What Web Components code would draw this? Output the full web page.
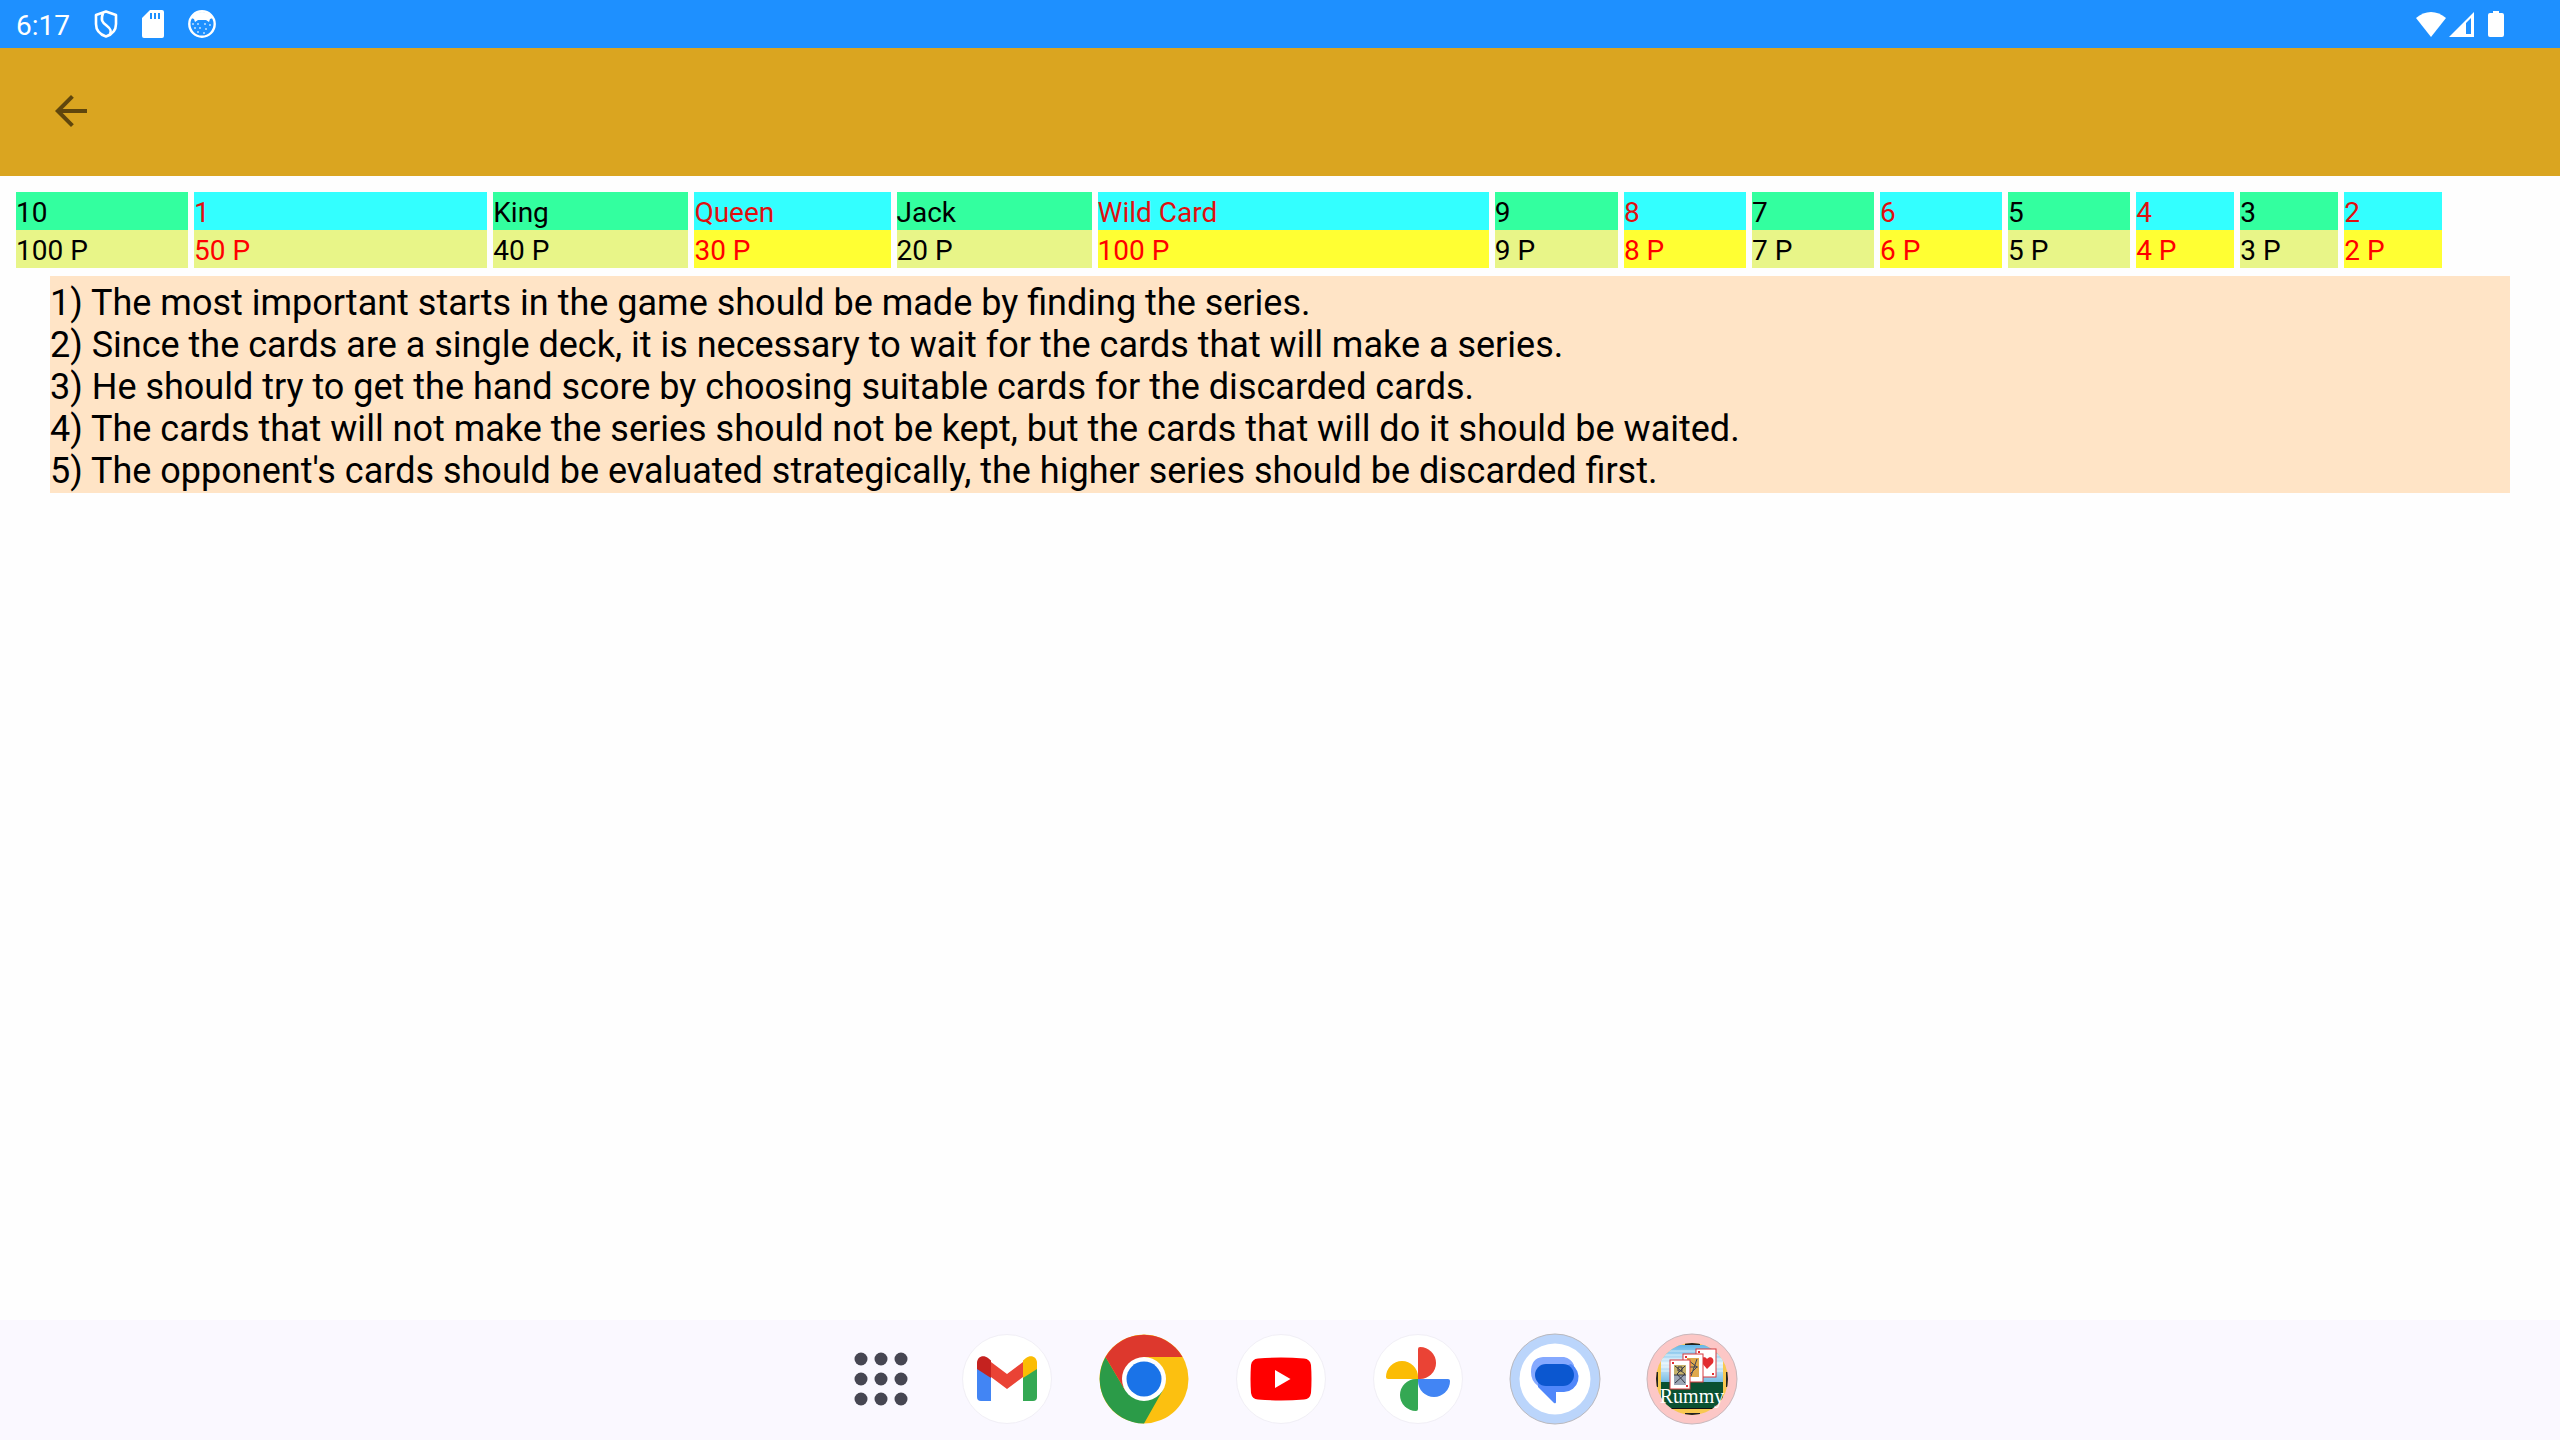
<!DOCTYPE html>
<html lang="en">
<head>
<meta charset="utf-8">
<meta name="viewport" content="width=device-width, initial-scale=1">
<title>Rummy</title>
<style>
  html, body { height: 100%; margin: 0; }
  body { font-family: Roboto, "Noto Sans", sans-serif; color: #000; background: #fefefe; }
</style>
</head>
<body>
<rummy-screen>
  <status-bar slot="status" time="6:17"></status-bar>
  <app-bar slot="bar"></app-bar>
  <score-table></score-table>
  <tip-list>
    <li>The most important starts in the game should be made by finding the series.</li>
    <li>Since the cards are a single deck, it is necessary to wait for the cards that will make a series.</li>
    <li>He should try to get the hand score by choosing suitable cards for the discarded cards.</li>
    <li>The cards that will not make the series should not be kept, but the cards that will do it should be waited.</li>
    <li>The opponent's cards should be evaluated strategically, the higher series should be discarded first.</li>
  </tip-list>
  <task-bar slot="dock"></task-bar>
</rummy-screen>

<script>
(function () {
  // label, points, relative column width
  const CARDS = [
    ["10", "100 P", 172],
    ["1", "50 P", 293],
    ["King", "40 P", 195],
    ["Queen", "30 P", 196],
    ["Jack", "20 P", 195],
    ["Wild Card", "100 P", 391],
    ["9", "9 P", 123],
    ["8", "8 P", 122],
    ["7", "7 P", 122],
    ["6", "6 P", 122],
    ["5", "5 P", 122],
    ["4", "4 P", 98],
    ["3", "3 P", 98],
    ["2", "2 P", 98],
  ];

  const STATUS_ICONS = {
    shield: `<svg width="24" height="30" viewBox="0 0 24 30" fill="none" stroke="#fff" stroke-width="2.600" stroke-linejoin="round"><path d="M12 2.500L22 6v9c0 6-4 10.500-10 12.500C6 25.500 2 21 2 15V6z"/><path d="M9 4C6.500 11 8 13 12.500 16.500S17.500 22 16 25"/></svg>`,
    card: `<svg width="22" height="28" viewBox="0 0 22 28"><path fill="#fff" fill-rule="evenodd" d="M8 0h12q2 0 2 2v24q0 2-2 2H2q-2 0-2-2V8zM8 3v6h2V3zM12 3v6h2V3zM16 3v6h2V3z"/></svg>`,
    face: `<svg width="28" height="28" viewBox="0 0 28 28"><circle cx="14" cy="14" r="12.700" fill="none" stroke="#fff" stroke-width="2.400"/><path fill="#fff" d="M3 8C8 0 20 0 25 8l-3 1-1 3-3-2h-8l-3 2-1-3z"/><g fill="#fff" opacity=".7"><circle cx="5" cy="14" r="1"/><circle cx="10" cy="14" r="1"/><circle cx="17" cy="14" r="1"/><circle cx="22" cy="15" r="1"/><circle cx="7" cy="18" r="1"/><circle cx="12" cy="18" r="1"/><circle cx="18" cy="19" r="1"/><circle cx="10" cy="22" r="1"/><circle cx="16" cy="23" r="1"/></g></svg>`,
    wifi: `<svg width="30" height="25" viewBox="0 0 30 25"><path fill="#fff" d="M15 25L0 6C9-2 21-2 30 6z"/></svg>`,
    signal: `<svg width="25" height="25" viewBox="0 0 25 25"><path fill="#fff" fill-rule="evenodd" d="M25 0v25H0zM17 11v11h5V6z"/></svg>`,
    battery: `<svg width="16" height="26" viewBox="0 0 16 26"><path fill="#fff" d="M5 0h6v2h3q2 0 2 2v20q0 2-2 2H2q-2 0-2-2V4q0-2 2-2h3z"/></svg>`,
  };

  const APP_ICONS = [
    ["Gmail", `<circle cx="46" cy="46" r="44.500" fill="#fff" stroke="#f1eff6"/>
      <path fill="#4285f4" d="M16 34l14 10v24H20q-4 0-4-4z"/>
      <path fill="#34a853" d="M62 44l14-10v30q0 4-4 4H62z"/>
      <path fill="#ea4335" d="M30 29l16 12 16-12v15L46 56 30 44z"/>
      <path fill="#c5221f" d="M16 36v-6c0-6 6-9 11-5l3 2.500V45z"/>
      <path fill="#fbbc04" d="M76 36v-6c0-6-6-9-11-5l-3 2.500V45z"/>`],
    ["Chrome", `<circle cx="46" cy="46" r="44.500" fill="#fcc010"/>
      <path fill="#2b9b48" d="M7.500 24A44.500 44.500 0 0 0 46 90.500L65 57 27 57z"/>
      <path fill="#dd382d" d="M7.500 24A44.500 44.500 0 0 1 84.500 24H46L27 57z"/>
      <circle cx="46" cy="46" r="22" fill="#fff"/><circle cx="46" cy="46" r="17.500" fill="#1a73e8"/>`],
    ["YouTube", `<circle cx="46" cy="46" r="44.500" fill="#fff" stroke="#f1eff6"/>
      <path fill="#f00" d="M23 25.500Q46 23.500 69 25.500Q75 26 76 32Q77 46 76 60Q75 66 69 66.500Q46 68.500 23 66.500Q17 66 16 60Q15 46 16 32Q17 26 23 25.500z"/>
      <path fill="#fff" d="M40 37v18l15.500-9z"/>`],
    ["Photos", `<circle cx="46" cy="46" r="44.500" fill="#fff" stroke="#f1eff6"/>
      <path fill="#ea4335" d="M46 46V16q0-2 2-2a16 16 0 0 1 0 32z"/>
      <path fill="#4285f4" d="M46 46h30q2 0 2 2a16 16 0 0 1-32 0z"/>
      <path fill="#34a853" d="M46 46v30q0 2-2 2a16 16 0 0 1 0-32z"/>
      <path fill="#fbbc04" d="M46 46H16q-2 0-2-2a16 16 0 0 1 32 0z"/>`],
    ["Messages", `<circle cx="46" cy="46" r="45" fill="#bbd5fb" stroke="#b9b8bd"/>
      <circle cx="46" cy="46" r="35.500" fill="#fff"/>
      <path fill="#85a9ff" d="M34 24h21a14 14 0 0 1 10 8v21L29 53a17 17 0 0 1-7-14q0-14 12-15z"/>
      <path fill="#5087fa" d="M62 31a15 15 0 0 1-7 28H47v10q0 2-2 1L29 54V42z"/>
      <rect x="26" y="31" width="39" height="22" rx="11" fill="#0b57d0"/>`],
    ["Rummy", `<defs>
        <clipPath id="face"><circle cx="46" cy="46" r="36"/></clipPath>
        <linearGradient id="sky" x2="0" y2="1"><stop stop-color="#63b5e8"/><stop offset=".5" stop-color="#dff1fb"/><stop offset="1" stop-color="#6fb9e4"/></linearGradient>
      </defs>
      <circle cx="46" cy="46" r="45" fill="#fcc7c6" stroke="#c9b7bb"/>
      <g clip-path="url(#face)">
        <rect width="92" height="92" fill="#f8c850"/>
        <path fill="#222" d="M39 10h15v2H39zM39 80h15v2H39zM10 39h2v15h-2zM80 39h2v15h-2z"/>
        <rect x="15" y="12" width="62" height="38" fill="url(#sky)"/>
        <path stroke="#fff" opacity=".6" d="M15 18h62M15 22h62M15 26h62M15 30h62M15 34h62M15 38h62"/>
        <rect x="15" y="49" width="62" height="26" fill="#0a5132"/>
        <path fill="#111" d="M15 75h62v1H15z"/>
      </g>
      <rect x="50" y="16" width="20" height="28" fill="#fff" stroke="#d8383d"/>
      <path fill="#e22c30" d="M61 36l-5-6c-3-5 3-8 5-4 3-4 8-1 6 4z"/>
      <rect x="37" y="21" width="20" height="28" fill="#fff" stroke="#d8383d"/>
      <path fill="#dfa94c" d="M41 25h12v19H41z"/>
      <path fill="none" stroke="#414456" d="M42 27l9 7-8 8M51 26l-6 17M42 34h10"/>
      <rect x="24" y="27" width="20" height="29" fill="#fff" stroke="#d8383d"/>
      <path fill="#c6b26a" d="M28 32h12v10H28z"/>
      <path fill="#9ba5b4" d="M28 42h12v10H28z"/>
      <path fill="none" stroke="#363844" d="M29 33l10 8-10 9M39 33l-8 8 8 9M28 42h12M32 34h4v4h-4z"/>
      <path stroke="#e22c30" stroke-width="2" d="M26 30h2M39 24h2M52 19h2M66 41h2M40 53h2"/>
      <text x="46" y="70" text-anchor="middle" font-family="Liberation Serif, serif" font-size="20" fill="#fff">Rummy</text>`],
  ];

  class RummyScreen extends HTMLElement {
    constructor() {
      super();
      this.attachShadow({ mode: "open" });
      this.shadowRoot.innerHTML = `
        <style>
          :host {
            display: flex;
            flex-direction: column;
            min-height: 100%;
          }

          main {
            display: flex;
            flex: 1;
            flex-direction: column;
            gap: 8px;
            padding: 16px 10px;
          }
        </style>
        <slot name="status"></slot>
        <slot name="bar"></slot>
        <main><slot></slot></main>
        <slot name="dock"></slot>
      `;
    }
  }

  class StatusBar extends HTMLElement {
    constructor() {
      super();
      this.attachShadow({ mode: "open" });
    }

    connectedCallback() {
      this.shadowRoot.innerHTML = `
        <style>
          :host {
            align-items: center;
            background: #1e90ff;
            box-sizing: border-box;
            color: #fff;
            display: flex;
            font-size: 28px;
            height: 48px;
            justify-content: space-between;
            line-height: 32px;
            padding: 0 56px 0 16px;
          }

          div { align-items: center; display: flex; }
          span { padding-top: 3px; }
          svg { display: block; }
          .left { gap: 24px; }
          .right { gap: 14px; }
          .network { gap: 3px; }
        </style>
        <div class="left">
          <span>${this.getAttribute("time")}</span>
          ${STATUS_ICONS.shield}${STATUS_ICONS.card}${STATUS_ICONS.face}
        </div>
        <div class="right">
          <div class="network">${STATUS_ICONS.wifi}${STATUS_ICONS.signal}</div>
          ${STATUS_ICONS.battery}
        </div>
      `;
    }
  }

  class AppBar extends HTMLElement {
    constructor() {
      super();
      this.attachShadow({ mode: "open" });
      this.shadowRoot.innerHTML = `
        <style>
          :host {
            align-items: center;
            background: #daa520;
            box-sizing: border-box;
            display: flex;
            height: 128px;
            padding: 0 47px 2px;
          }

          button {
            background: none;
            border: 0;
            padding: 0;
          }

          svg { display: block; }
        </style>
        <button type="button" aria-label="Back">
          <svg width="48" height="48" viewBox="0 0 24 24"><path fill="#5f460d" d="M20 11H7.830l5.590-5.590L12 4l-8 8 8 8 1.410-1.410L7.830 13H20z"/></svg>
        </button>
      `;
    }
  }

  class ScoreTable extends HTMLElement {
    constructor() {
      super();
      this.attachShadow({ mode: "open" });

      const total = CARDS.reduce((sum, card) => sum + card[2], 0);
      const cols = CARDS.map((card) => `<col style="width: ${(card[2] / total) * 100}%">`).join("");
      const heads = CARDS.map((card) => `<th scope="col">${card[0]}</th>`).join("");
      const cells = CARDS.map((card) => `<td>${card[1]}</td>`).join("");

      this.shadowRoot.innerHTML = `
        <style>
          :host { display: block; }

          table {
            border-collapse: separate;
            border-spacing: 6px 0;
            font-size: 28px;
            line-height: 35px;
            table-layout: fixed;
            width: 96%;
          }

          th, td {
            font-weight: 400;
            padding: 3px 0 0;
            text-align: left;
            white-space: nowrap;
          }

          th { background: #33ff9f; }
          td { background: #e8f588; }
          th:nth-child(even) { background: #33ffff; color: #e01010; }
          td:nth-child(even) { background: #ffff33; color: #f00; }
          td:nth-child(2) { background: #e8f588; }
        </style>
        <table>
          <colgroup>${cols}</colgroup>
          <thead><tr>${heads}</tr></thead>
          <tbody><tr>${cells}</tr></tbody>
        </table>
      `;
    }
  }

  class TipList extends HTMLElement {
    constructor() {
      super();
      this.attachShadow({ mode: "open" });
    }

    connectedCallback() {
      const tips = Array.from(this.querySelectorAll("li"));
      const lines = tips.map((tip, index) => `<div role="listitem">${index + 1}) ${tip.textContent}</div>`);
      this.replaceChildren();
      this.shadowRoot.innerHTML = `
        <style>
          :host {
            background: #ffe4c6;
            display: block;
            font-size: 36px;
            line-height: 42px;
            margin: 0 40px;
            padding: 6px 0 1px;
          }
        </style>
        <div role="list">${lines.join("")}</div>
      `;
    }
  }

  class TaskBar extends HTMLElement {
    constructor() {
      super();
      this.attachShadow({ mode: "open" });

      const dots = [7, 27, 47]
        .map((y) => [7, 27, 47].map((x) => `<circle cx="${x}" cy="${y}" r="6.500"/>`).join(""))
        .join("");
      const apps = APP_ICONS.map(
        ([name, art]) => `<button type="button" aria-label="${name}"><svg width="92" height="92" viewBox="0 0 92 92">${art}</svg></button>`
      ).join("");

      this.shadowRoot.innerHTML = `
        <style>
          :host {
            align-items: center;
            background: #faf8ff;
            box-sizing: border-box;
            display: flex;
            gap: 45px;
            height: 120px;
            justify-content: center;
            padding: 0 0 2px 24px;
          }

          button {
            background: none;
            border: 0;
            padding: 0;
          }

          .all { padding: 0 8px; }
          svg { display: block; }
        </style>
        <button type="button" class="all" aria-label="All apps"><svg width="54" height="54" viewBox="0 0 54 54" fill="#464652">${dots}</svg></button>
        ${apps}
      `;
    }
  }

  customElements.define("rummy-screen", RummyScreen);
  customElements.define("status-bar", StatusBar);
  customElements.define("app-bar", AppBar);
  customElements.define("score-table", ScoreTable);
  customElements.define("tip-list", TipList);
  customElements.define("task-bar", TaskBar);
})();
</script>
</body>
</html>
